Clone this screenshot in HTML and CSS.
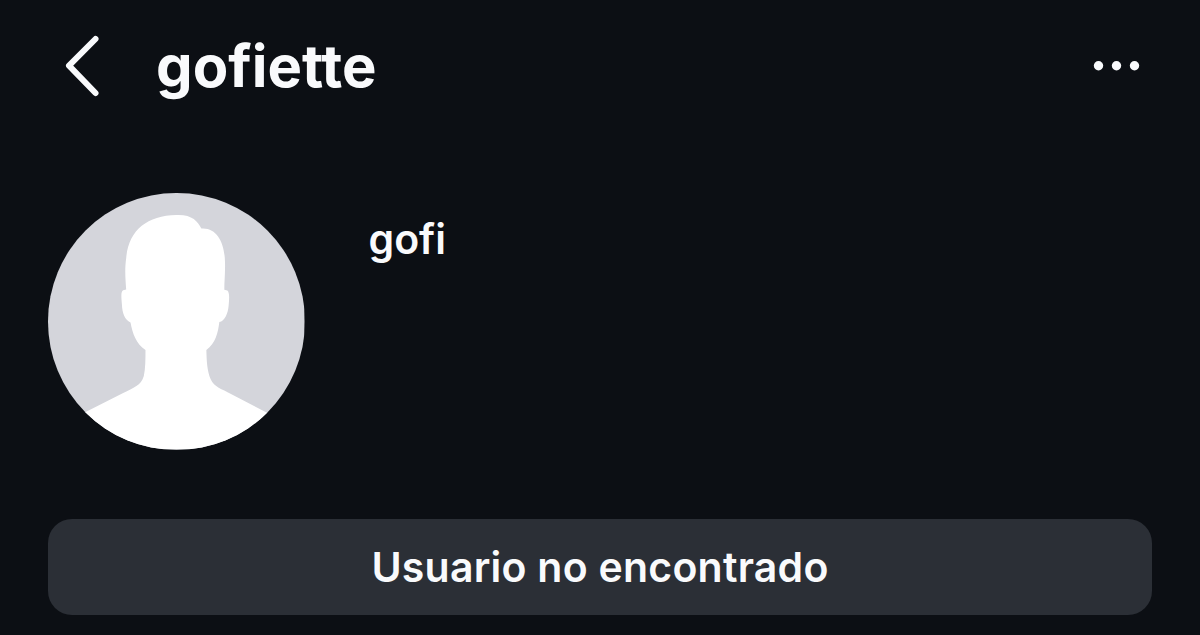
FILE: index.html
```html
<!DOCTYPE html>
<html lang="es">
<head>
<meta charset="utf-8">
<title>gofiette</title>
<link rel="stylesheet" href="styles.css">
</head>
<body>
<main class="screen">
  <header class="topbar">
    <svg class="back" width="40" height="64" viewBox="0 0 40 64" aria-label="Atrás"><path d="M33.500 5L7 31.700L33.500 59"/></svg>
    <h1 class="handle">gofiette</h1>
    <svg class="more" width="48" height="12" viewBox="0 0 48 12" aria-label="Más"><circle cx="5.500" cy="5.700" r="4.700"/><circle cx="23.500" cy="5.700" r="4.700"/><circle cx="41.500" cy="5.700" r="4.700"/></svg>
  </header>
  <section class="profile">
    <svg class="avatar" viewBox="0 0 771 771" aria-hidden="true">
      <rect width="771" height="771" fill="#d4d5db"/>
      <path fill="#fff" d="M386 66C432 64 450 84 461 107C508 103 531 151 532 207C533 240 530 265 530 291L539 293C546 299 545 316 543 338C541 363 531 384 515 388C511 421 504 451 476 472C477 505 478 534 489 560C500 584 522 589 550 604L651 657L771 720V771H0V720L116 657L226 601C257 586 280 578 288 550C293 527 293 499 293 472C265 453 254 422 248 389C231 382 223 362 222 333C220 309 219 296 226 292L235 290C233 261 230 232 235 196C242 112 297 68 386 66Z"/>
    </svg>
    <p class="name">gofi</p>
  </section>
  <button class="notice" type="button">Usuario no encontrado</button>
</main>
</body>
</html>
```
FILE: styles.css
```css
* { box-sizing: border-box; }
body { margin: 0; background: #0c0f14; color: #f9fafc; font-family: Inter, "Liberation Sans", sans-serif; }
.screen { height: 635px; padding: 26px 48px 0; overflow: hidden; display: flex; flex-direction: column; }
.topbar { display: flex; align-items: center; height: 80px; padding: 0 11px 0 14px; }
.back { fill: none; stroke: #f9fafc; stroke-width: 6; stroke-linecap: round; stroke-linejoin: round; }
.handle { flex: 1; margin: 0 0 0 54px; font-size: 58px; line-height: 80px; font-weight: 700; }
.more { fill: #f9fafc; }
.profile { display: flex; align-items: flex-start; margin-top: 87px; }
.avatar { width: 256.5px; height: 256.5px; border-radius: 50%; }
.name { margin: 22px 0 0 64px; font-size: 41px; line-height: 48px; font-weight: 600; }
.notice { margin: 69.500px 0 0; width: 1104px; height: 96px; padding: 1px 0 0; border: 0; border-radius: 24px; background: #2b2f36; color: inherit; font: 600 41px/95px Inter, "Liberation Sans", sans-serif; letter-spacing: 0.240px; }
```
